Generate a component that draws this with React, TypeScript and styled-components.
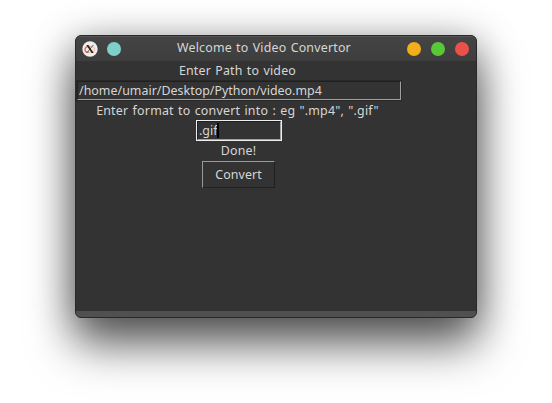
import React from "react";
import styled, { createGlobalStyle } from "styled-components";

const GlobalStyle = createGlobalStyle`
  * { box-sizing: border-box; }
  body { margin: 0; background: #fff; overflow: hidden; }
`;

const Desktop = styled.main`
  width: 552px;
  height: 403px;
  padding: 35px 75px;
  background: #fff;
`;

const Window = styled.section`
  width: 402px;
  height: 283px;
  display: flex;
  flex-direction: column;
  overflow: hidden;
  border: 1px solid #292929;
  border-radius: 6px;
  background: #333;
  color: #d6d6d6;
  font: 12.4px/19px "Noto Sans", sans-serif;
  word-spacing: 0.8px;
  box-shadow: 0 27px 46px rgba(0, 0, 0, 0.58), 0 5px 38px rgba(0, 0, 0, 0.34);
`;

const TitleBar = styled.header`
  height: 25px;
  flex: none;
  display: grid;
  grid-template-columns: 101px 1fr 74px;
  align-items: center;
  border-top: 1px solid #555;
  background: linear-gradient(#444, #3e3e3e);
`;

const Controls = styled.div<{ $end?: boolean }>`
  display: flex;
  align-items: center;
  gap: ${(p) => (p.$end ? 10 : 9)}px;
  padding-left: ${(p) => (p.$end ? 5 : 6)}px;
`;

const Dot = styled.span<{ $color: string }>`
  width: 14px;
  height: 14px;
  border-radius: 50%;
  background: ${(p) => p.$color};
`;

const Title = styled.h1`
  margin: 0;
  padding-bottom: 3px;
  font: inherit;
  letter-spacing: 0.2px;
  white-space: nowrap;
`;

const Form = styled.div`
  flex: 1;
  width: 326px;
  display: flex;
  flex-direction: column;
  align-items: center;
`;

const Label = styled.label<{ $spacing: number; $shift?: number }>`
  height: 19px;
  flex: none;
  margin-left: ${(p) => p.$shift ?? -3}px;
  letter-spacing: ${(p) => p.$spacing}px;
  white-space: nowrap;
`;

const Field = styled.div<{ $width: number; $focused?: boolean }>`
  width: ${(p) => p.$width}px;
  height: 21px;
  flex: none;
  border: 1px solid ${(p) => (p.$focused ? "#eee" : "#282828")};
`;

const Entry = styled.div`
  height: 19px;
  display: flex;
  align-items: center;
  padding-left: 1px;
  border: 1px solid;
  border-color: #202020 #a0a0a0 #a0a0a0 #202020;
  letter-spacing: 0.03px;
  white-space: nowrap;
`;

const Caret = styled.span`
  width: 2px;
  height: 15px;
  margin-left: -1px;
  background: #000;
`;

const Button = styled.button`
  width: 73px;
  height: 27px;
  flex: none;
  margin: 1px 1px 0 0;
  padding: 0;
  border: 1px solid;
  border-color: #999 #202020 #202020 #999;
  background: #333;
  color: inherit;
  font: inherit;
  letter-spacing: 0.1px;
`;

const Footer = styled.footer`
  height: 6px;
  flex: none;
  background: #505050;
`;

const XLogo = () => (
  <svg width="16" height="16" viewBox="0 0 16 16" aria-hidden="true">
    <circle cx="8" cy="8" r="7.7" fill="#eee" />
    <ellipse cx="7.8" cy="8.4" rx="4.7" ry="3.3" fill="none" stroke="#efb596" strokeWidth="1" />
    <path d="M6.4 5.3C2.4 6 2 10.2 4.8 11.4l2.2-.7" fill="none" stroke="#dc704b" strokeWidth="1.2" />
    <path d="M11.4 3.9 4.7 11.9" stroke="#444" strokeWidth="0.8" />
    <path d="M4.3 4h2.1l5.3 7.9H9.6Z" fill="#252525" />
  </svg>
);

export default function App() {
  return (
    <>
      <GlobalStyle />
      <Desktop>
        <Window>
          <TitleBar>
            <Controls>
              <XLogo />
              <Dot $color="#7dd1c8" />
            </Controls>
            <Title>Welcome to Video Convertor</Title>
            <Controls $end>
              <Dot $color="#f2ae1b" />
              <Dot $color="#58c936" />
              <Dot $color="#eb5149" />
            </Controls>
          </TitleBar>
          <Form>
            <Label $spacing={0.2}>Enter Path to video</Label>
            <Field $width={326}>
              <Entry>/home/umair/Desktop/Python/video.mp4</Entry>
            </Field>
            <Label $spacing={0.22}>Enter format to convert into : eg ".mp4", ".gif"</Label>
            <Field $width={86} $focused>
              <Entry>.gif<Caret /></Entry>
            </Field>
            <Label $spacing={0.15} $shift={-1}>Done!</Label>
            <Button>Convert</Button>
          </Form>
          <Footer />
        </Window>
      </Desktop>
    </>
  );
}
